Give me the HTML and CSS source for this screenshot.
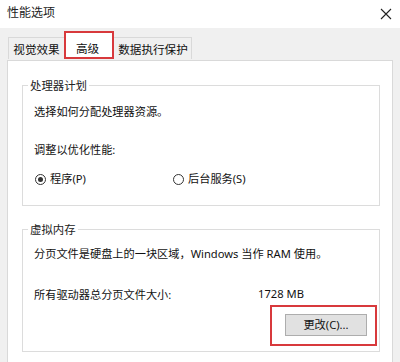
FILE: index.html
```html
<!DOCTYPE html>
<html lang="zh-CN">
<head>
<meta charset="utf-8">
<title>性能选项</title>
<link rel="stylesheet" href="styles.css">
</head>
<body>
<div class="window">
  <div class="titlebar">
    <span class="title">性能选项</span>
    <svg class="close" width="12" height="12" viewBox="0 0 12 12"><path d="M1 1L11 11M11 1L1 11" stroke="#222" stroke-width="1.1" fill="none"/></svg>
  </div>
  <div class="tabs">
    <div class="tab tab-1">视觉效果</div>
    <div class="tab tab-active">高级</div>
    <div class="tab tab-3">数据执行保护</div>
  </div>
  <div class="panel">
    <fieldset class="group group-cpu">
      <legend>处理器计划</legend>
      <div class="line first">选择如何分配处理器资源。</div>
      <div class="line adjust">调整以优化性能:</div>
      <div class="radios">
        <label class="radio radio-1"><span class="dot checked"></span>程序(P)</label>
        <label class="radio"><span class="dot"></span>后台服务(S)</label>
      </div>
    </fieldset>
    <fieldset class="group group-mem">
      <legend>虚拟内存</legend>
      <div class="line first">分页文件是硬盘上的一块区域，Windows 当作 RAM 使用。</div>
      <div class="line size-row"><span class="size-label">所有驱动器总分页文件大小:</span><span class="size-value">1728 MB</span></div>
      <div class="btn-row">
        <div class="btn-wrap">
          <button class="btn">更改(C)...</button>
          <span class="mark"></span>
        </div>
      </div>
    </fieldset>
  </div>
</div>
</body>
</html>
```

FILE: styles.css
```css
* { box-sizing: border-box; }
html, body {
  margin: 0;
  padding: 0;
  width: 400px;
  height: 362px;
  overflow: hidden;
  background: #f0f0f0;
  font-family: "Noto Sans", "Noto Sans CJK SC", sans-serif;
  color: #111;
}
.window { width: 400px; }
.titlebar {
  height: 28px;
  background: #ffffff;
  display: flex;
  align-items: center;
  justify-content: space-between;
  padding: 0 8px 2px 7px;
}
.title {
  font-size: 12px;
  line-height: 16px;
  color: #222;
}
.close { display: block; margin-top: 2px; }

.tabs {
  display: flex;
  align-items: flex-end;
  padding-left: 8px;
  margin-top: 3px;
  height: 28px;
}
.tab {
  font-family: "Noto Sans CJK SC", sans-serif;
  font-size: 11.6px;
  line-height: 14px;
  height: 22px;
  border: 1px solid #d9d9d9;
  border-bottom: none;
  background: #f0f0f0;
  display: flex;
  align-items: center;
  justify-content: center;
  color: #111;
}
.tab-1 { width: 56px; border-right: none; }
.tab-active {
  width: 50px;
  height: 28px;
  background: #ffffff;
  border: 2px solid #d8393c;
  align-items: flex-start;
  padding-top: 8px;
  padding-right: 3px;
}
.tab-3 { width: 78px; border-left: none; padding-left: 1px; }

.panel {
  margin: 1px 7px 0 7px;
  border: 1px solid #d9d9d9;
  background: #ffffff;
  padding-top: 17px;
  height: 320px;
}
.group {
  margin: 0 12px 0 14px;
  padding: 0 0 0 11px;
  border: 1px solid #dcdcdc;
  min-width: 0;
}
.group legend {
  font-family: "Noto Sans CJK SC", sans-serif;
  font-size: 11.4px;
  line-height: 14px;
  padding: 0 2px;
  margin-left: -6px;
  color: #222;
}
.line {
  font-size: 11.2px;
  line-height: 16px;
  white-space: nowrap;
  color: #111;
}
.group-cpu { padding-bottom: 18px; }
.group-cpu .first { margin-top: 12px; }
.group-cpu .adjust { margin-top: 22px; }
.radios {
  display: flex;
  margin-top: 13px;
  font-size: 11.2px;
  line-height: 16px;
}
.radio {
  display: flex;
  align-items: center;
  padding-left: 1px;
}
.radio-1 { width: 138px; }
.dot {
  width: 11px;
  height: 11px;
  border: 1px solid #333;
  border-radius: 50%;
  margin-right: 4px;
  display: flex;
  align-items: center;
  justify-content: center;
  background: #fff;
}
.dot.checked::after {
  content: "";
  width: 5px;
  height: 5px;
  border-radius: 50%;
  background: #333;
}

.group-mem { margin-top: 16px; padding-bottom: 15px; }
.group-mem .first { margin-top: 10px; }
.size-row { margin-top: 25px; display: flex; }
.size-label { width: 224px; }
.size-value { position: relative; top: -1px; }
.btn-row {
  display: flex;
  justify-content: flex-end;
  padding-right: 12px;
  margin-top: 11px;
}
.btn-wrap { position: relative; }
.btn {
  display: block;
  width: 82px;
  height: 22px;
  background: #e1e1e1;
  border: 1px solid #adadad;
  font-family: "Noto Sans", "Noto Sans CJK SC", sans-serif;
  font-size: 11.2px;
  line-height: 14px;
  color: #111;
  padding: 0;
}
.mark {
  position: absolute;
  left: -15px;
  right: -10px;
  top: -9px;
  bottom: -10px;
  border: 2px solid #d8393c;
}
```
